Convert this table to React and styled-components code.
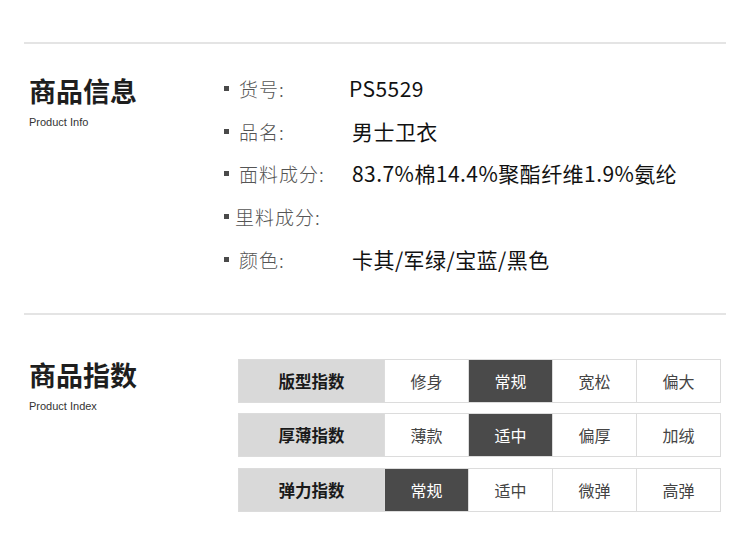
import React from "react";
import styled, { createGlobalStyle } from "styled-components";

const Global = createGlobalStyle`
  html, body { margin: 0; padding: 0; background: #fff; }
  body { font-family: "Noto Sans CJK SC", "Noto Sans", sans-serif; color: #222; }
`;

const Page = styled.div`
  width: 750px;
  padding: 42px 24px 0;
  box-sizing: border-box;
`;

const Divider = styled.div`
  height: 2px;
  background: #e4e4e4;
`;

const Section = styled.section`
  display: grid;
  grid-template-columns: ${(p) => p.$left}px 1fr;
  padding: ${(p) => p.$pad};
  padding-left: 5px;
`;

const Heading = styled.div`
  padding-top: ${(p) => p.$top}px;
`;

const Title = styled.h2`
  margin: 0;
  font-family: "Noto Sans CJK SC", sans-serif;
  font-weight: 700;
  font-size: 27px;
  line-height: 30px;
  color: #1e1e1e;
`;

const Sub = styled.div`
  margin-top: ${(p) => p.$gap}px;
  font-family: "Liberation Sans", Arial, sans-serif;
  font-size: 11px;
  line-height: 13px;
  color: #333;
`;

const InfoList = styled.ul`
  list-style: none;
  margin: 0;
  padding: 0;
`;

const InfoRow = styled.li`
  display: flex;
  align-items: center;
  height: 42.8px;
`;

const Bullet = styled.span`
  width: 5px;
  height: 5px;
  background: #4a4a4a;
  margin: 0 ${(p) => (p.$tight ? 6 : 10)}px 0 2px;
  flex: none;
`;

const Label = styled.span`
  width: ${(p) => (p.$tight ? 114 : 110)}px;
  flex: none;
  font-size: 19px;
  font-weight: 300;
  letter-spacing: 1px;
  color: #555;
  line-height: 1;
`;

const Value = styled.span`
  font-size: 21px;
  letter-spacing: 0.45px;
  color: #111;
  line-height: 1;
  padding-left: ${(p) => (p.$latin ? 0 : 3)}px;
`;

const Table = styled.div`
  display: flex;
  flex-direction: column;
  gap: 10.5px;
  padding-left: 4px;
`;

const IndexRow = styled.div`
  display: grid;
  grid-template-columns: 145px repeat(4, 1fr);
  width: 483px;
  height: 44px;
  box-sizing: border-box;
  border: 1px solid #dcdcdc;
`;

const RowLabel = styled.div`
  display: flex;
  align-items: center;
  justify-content: center;
  background: #d9d9d9;
  font-size: 16.5px;
  font-weight: 700;
  color: #1a1a1a;
`;

const Option = styled.div`
  display: flex;
  align-items: center;
  justify-content: center;
  border-left: 1px solid #dcdcdc;
  background: ${(p) => (p.$on ? "#4a4a4a" : "#fff")};
  color: ${(p) => (p.$on ? "#fff" : "#444")};
  font-size: 16px;
`;

const info = [
  ["货号:", "PS5529", true],
  ["品名:", "男士卫衣"],
  ["面料成分:", "83.7%棉14.4%聚酯纤维1.9%氨纶"],
  ["里料成分:", "", false, true],
  ["颜色:", "卡其/军绿/宝蓝/黑色"],
];

const index = [
  ["版型指数", ["修身", "常规", "宽松", "偏大"], 1],
  ["厚薄指数", ["薄款", "适中", "偏厚", "加绒"], 1],
  ["弹力指数", ["常规", "适中", "微弹", "高弹"], 0],
];

export default function App() {
  return (
    <Page>
      <Global />
      <Divider />
      <Section $left={193} $pad="23px 0 32px">
        <Heading $top={9}>
          <Title>商品信息</Title>
          <Sub $gap={10}>Product Info</Sub>
        </Heading>
        <InfoList>
          {info.map(([k, v, latin, tight]) => (
            <InfoRow key={k}>
              <Bullet $tight={tight} />
              <Label $tight={tight}>{k}</Label>
              <Value $latin={latin}>{v}</Value>
            </InfoRow>
          ))}
        </InfoList>
      </Section>
      <Divider />
      <Section $left={205} $pad="44px 0 30px">
        <Heading $top={1}>
          <Title>商品指数</Title>
          <Sub $gap={10}>Product Index</Sub>
        </Heading>
        <Table>
          {index.map(([name, opts, on]) => (
            <IndexRow key={name}>
              <RowLabel>{name}</RowLabel>
              {opts.map((o, i) => (
                <Option key={o} $on={i === on}>
                  {o}
                </Option>
              ))}
            </IndexRow>
          ))}
        </Table>
      </Section>
    </Page>
  );
}
